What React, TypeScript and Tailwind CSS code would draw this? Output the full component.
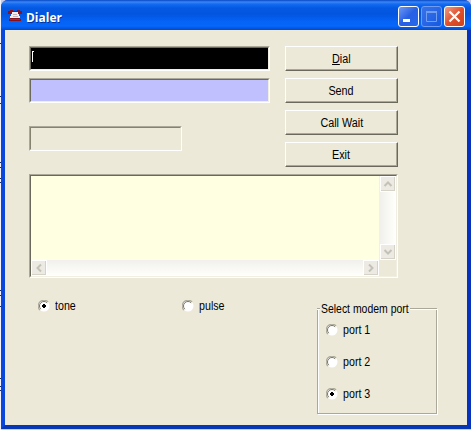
import type { ReactNode } from 'react';

function Radio({ label, checked = false, width }: { label: string; checked?: boolean; width: string }) {
  return (
    <label className="flex h-3 items-center gap-[5px]">
      <svg className="shrink-0" width="12" height="12" viewBox="0 0 12 12">
        <circle cx="6" cy="6" r="5.500" fill="#fff" />
        <path d="M1.900 10.100A5.500 5.500 0 0 1 10.100 1.900" fill="none" stroke="#aca899" strokeWidth="1.100" />
        <path d="M2.800 9.200A4.500 4.500 0 0 1 9.200 2.800" fill="none" stroke="#77756a" strokeWidth="1" />
        {checked && <path d="M5 4h2v1h1v2h-1v1h-2v-1h-1v-2h1z" fill="#000" />}
      </svg>
      <span className={`block origin-left scale-x-[.89] whitespace-nowrap leading-3 ${width}`}>{label}</span>
    </label>
  );
}

function PushButton({ children }: { children: ReactNode }) {
  return (
    <button className="flex h-[25px] w-[113px] items-center justify-center border border-t-white border-l-white border-r-[#6b695c] border-b-[#6b695c] bg-[#ece9d8] leading-3 shadow-[inset_-1px_-1px_0_#aca899]">
      <span className="block scale-x-[.9] whitespace-nowrap">{children}</span>
    </button>
  );
}

function ArrowButton({ d }: { d: string }) {
  return (
    <div className="flex h-4 w-4 shrink-0 items-center justify-center border border-white bg-[#eceae2] shadow-[inset_-1px_-1px_0_#d5d3c8]">
      <svg width="10" height="10" viewBox="0 0 10 10">
        <path d={d} fill="none" stroke="#c3c2b8" strokeWidth="2" />
      </svg>
    </div>
  );
}

function PhoneIcon() {
  return (
    <svg width="16" height="14" viewBox="0 0 16 14">
      <path d="M3 1h3v1h4V1h3v1h2v3h-4V4H5v1H1V2h2z" fill="#8c1020" />
      <path d="M4 6h8v2h1v2h1v2H2v-2h1V8h1z" fill="#86101c" />
      <path d="M5 3h6v2h1v2h1v2H3V7h1V5h1z" fill="#f3ecec" />
      <path d="M6 5h4v1H6zM6 7h5v1H6z" fill="#c3b4bb" />
      <path d="M3 10h10v1H3z" fill="#a82a32" />
    </svg>
  );
}

function TitleBar() {
  return (
    <header className="flex h-[30px] items-center rounded-t-[7px] bg-[linear-gradient(180deg,#0845c4_0px,#3a86f5_2px,#146cf2_4px,#0459e2_8px,#0255df_14px,#0562f5_21px,#0667fb_26px,#0458e4_28px,#0348cf_30px)] pl-[6px] pr-[6px] pt-[3px]">
      <div className="-mt-px"><PhoneIcon /></div>
      <h1 className="ml-[3px] mt-px w-[37px] origin-left scale-x-[.92] whitespace-nowrap font-['Open_Sans','Noto_Sans',sans-serif] text-[13px] font-bold leading-4 text-white [text-shadow:1px_1px_0_#06309a]">Dialer</h1>
      <div className="ml-auto flex gap-[2px]">
        <div className="h-[21px] w-[21px] rounded-[3px] border border-white bg-linear-to-br from-[#6d97f2] via-[#2860e4] to-[#2468ed]">
          <svg width="19" height="19" viewBox="0 0 19 19"><path d="M4 12h7v3H4z" fill="#fff" /></svg>
        </div>
        <div className="h-[21px] w-[21px] rounded-[3px] border border-[#6f9bf0] bg-linear-to-br from-[#3972e9] to-[#1259e2]">
          <svg width="19" height="19" viewBox="0 0 19 19"><path d="M4.500 5v9.500h10V5" fill="none" stroke="#719eef" /><path d="M4 4h11v2H4z" fill="#719eef" /></svg>
        </div>
        <div className="h-[21px] w-[21px] rounded-[3px] border border-white bg-linear-to-br from-[#ed9b83] via-[#e1502a] to-[#cf421c]">
          <svg width="19" height="19" viewBox="0 0 19 19"><path d="m4.500 4.500 10 10m0-10-10 10" stroke="#fff" strokeWidth="2.200" /></svg>
        </div>
      </div>
    </header>
  );
}

function LogBox() {
  return (
    <div className="flex h-[104px] w-[369px] flex-col border border-t-[#aca899] border-l-[#aca899] border-r-white border-b-white bg-[#ece9d8]">
      <div className="flex h-[102px] flex-col border border-t-[#6b695c] border-l-[#6b695c] border-r-[#f1efe2] border-b-[#f1efe2]">
        <div className="flex h-[84px]">
          <div className="flex-1 bg-[#ffffe1]" />
          <div className="flex w-[17px] flex-col items-center justify-between bg-linear-to-r from-[#f0efeb] to-[#fffffc]">
            <ArrowButton d="m1.500 7 3.500-3.500L8.500 7" />
            <ArrowButton d="m1.500 3 3.500 3.500L8.500 3" />
          </div>
        </div>
        <div className="flex h-4">
          <div className="flex flex-1 justify-between bg-linear-to-b from-[#f1f0ed] to-[#fffffc]">
            <ArrowButton d="M7 1.500 3.500 5 7 8.500" />
            <ArrowButton d="M3 1.500 6.500 5 3 8.500" />
          </div>
          <div className="w-[17px] bg-[#ece9d8]" />
        </div>
      </div>
    </div>
  );
}

/* Slivers of the window behind, visible along the left edge. */
function BackdropEdge() {
  return (
    <div className="h-[430px] w-px shrink-0 bg-[#f4f4f8]">
      <div className="h-[43px]" />
      <div className="h-px bg-[#1c2c66]" />
      <div className="h-[52px]" />
      <div className="h-px bg-[#1c2c66]" />
      <div className="h-[6px]" />
      <div className="h-px bg-[#1c2c66]" />
      <div className="h-[58px]" />
      <div className="h-px bg-[#1c2c66]" />
      <div className="h-1" />
      <div className="h-px bg-[#1c2c66]" />
      <div className="h-[10px]" />
      <div className="h-px bg-[#1c2c66]" />
      <div className="h-[3px]" />
      <div className="h-px bg-[#1c2c66]" />
      <div className="h-[107px]" />
      <div className="h-px bg-[#1c2c66]" />
      <div className="h-1" />
      <div className="h-px bg-[#1c2c66]" />
      <div className="h-[10px]" />
      <div className="h-px bg-[#1c2c66]" />
      <div className="h-[71px]" />
      <div className="h-px bg-[#1c2c66]" />
      <div className="h-[7px]" />
      <div className="h-px bg-[#1c2c66]" />
      <div className="h-[3px]" />
      <div className="h-px bg-[#1c2c66]" />
    </div>
  );
}

export default function App() {
  return (
    <div className="flex h-[430px] w-[471px] overflow-hidden bg-[#c5cbe8] font-['Liberation_Sans',Arial,sans-serif] text-[12px] text-black">
      <BackdropEdge />
      <div className="h-[429px] w-[470px] rounded-t-[7px] bg-[#0831d9]">
        <TitleBar />
        <div className="h-[399px] border-x-4 border-b-4 border-l-[#0a48dd] border-r-[#0732bd] border-b-[#0737b5]">
          <main className="h-[395px] bg-[#ece9d8] pl-6 pt-4">
            <div className="flex gap-[15px]">
              <div className="w-[241px]">
                <div className="h-[25px] border border-t-[#aca899] border-l-[#aca899] border-r-white border-b-white">
                  <div className="h-[23px] border border-[#6b695c] border-r-[#f1efe2] border-b-[#f1efe2] bg-black pl-px pt-[3px]">
                    <div className="flex h-[11px] w-[2px] bg-linear-to-b from-white from-10% to-black to-10%">
                      <div className="w-px bg-white" />
                    </div>
                  </div>
                </div>
                <div className="mt-[7px] h-[25px] border border-t-[#aca899] border-l-[#aca899] border-r-white border-b-white">
                  <div className="h-[23px] border border-[#6b695c] border-r-[#f1efe2] border-b-[#f1efe2] bg-[#c0c0ff]" />
                </div>
                <div className="mt-[23px] h-[25px] w-[153px] border border-t-[#aca899] border-l-[#aca899] border-r-white border-b-white">
                  <div className="h-[23px] border border-[#85826f] border-r-[#ece9d8] border-b-[#ece9d8]" />
                </div>
              </div>
              <div className="flex flex-col gap-[7px]">
                <PushButton><u className="underline-offset-1">D</u>ial</PushButton>
                <PushButton>Send</PushButton>
                <PushButton>Call Wait</PushButton>
                <PushButton>Exit</PushButton>
              </div>
            </div>
            <div className="mt-[7px]"><LogBox /></div>
            <div className="flex">
              <div className="flex w-[288px] gap-[105px] pl-[9px] pt-[22px]">
                <Radio label="tone" checked width="w-[22px]" />
                <Radio label="pulse" width="w-[27px]" />
              </div>
              <fieldset className="mt-[24px] h-[112px] w-[120px]">
                <div className="flex h-3 items-center">
                  <span className="mt-[1px] h-0.5 w-[3px] border-t border-b border-t-[#aca899] border-b-white" />
                  <span className="w-[90px] whitespace-nowrap px-px pt-px leading-3">
                    <span className="block origin-left scale-x-[.87]">Select modem port</span>
                  </span>
                  <span className="mt-[1px] h-0.5 flex-1 border-t border-b border-t-[#aca899] border-b-white" />
                </div>
                <div className="-mt-[6px] h-[106px] border-x border-b border-[#aca899] pl-2 pt-4 shadow-[1px_1px_0_#fff,inset_1px_0_0_#fff]">
                  <div className="flex flex-col gap-5">
                    <Radio label="port 1" width="w-[27px]" />
                    <Radio label="port 2" width="w-[27px]" />
                    <Radio label="port 3" checked width="w-[27px]" />
                  </div>
                </div>
              </fieldset>
            </div>
          </main>
        </div>
      </div>
    </div>
  );
}
